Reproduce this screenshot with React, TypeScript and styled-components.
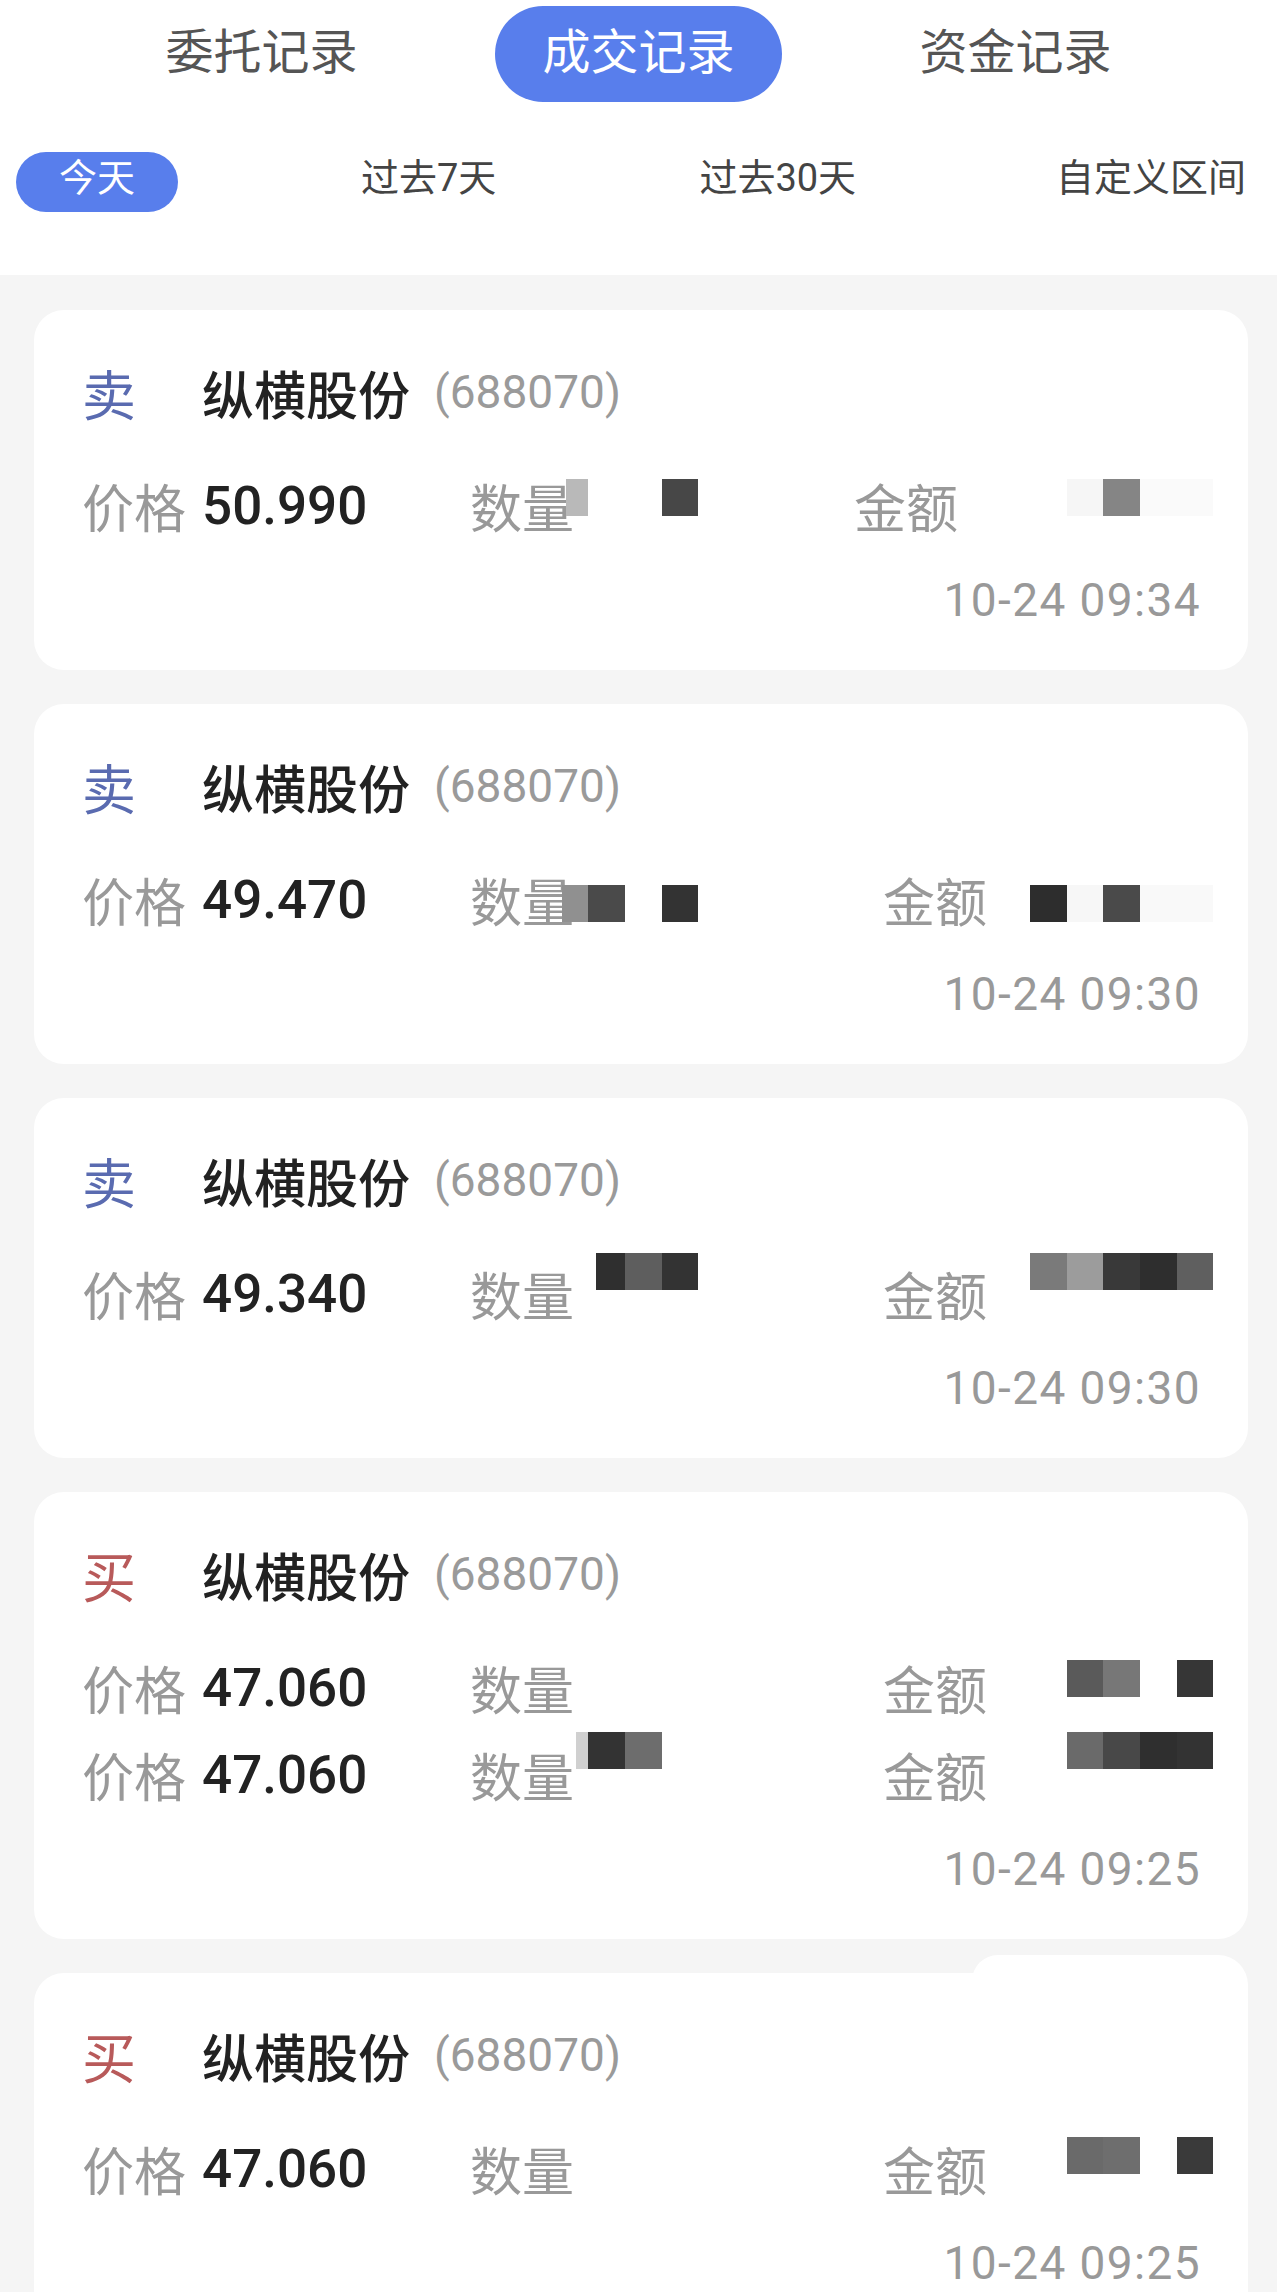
import React from "react"
import styled, { createGlobalStyle } from "styled-components"

type Cell = [number, string]
type Mosaic = { dx: number; dy: number; cells: Cell[] }
type Row = { price: string; qty?: Mosaic; amount?: Mosaic }
type Trade = { side: "buy" | "sell"; rows: Row[]; time: string; tightAmount?: boolean; bump?: boolean }

const trades: Trade[] = [
  {
    side: "sell",
    tightAmount: true,
    time: "10-24 09:34",
    rows: [
      {
        price: "50.990",
        qty: { dx: -8, dy: -8, cells: [[22, "#b9b9b9"], [74, "transparent"], [36, "#474747"]] },
        amount: { dx: 109, dy: -8, cells: [[36, "#f6f6f6"], [37, "#858585"], [73, "#fafafa"]] },
      },
    ],
  },
  {
    side: "sell",
    time: "10-24 09:30",
    rows: [
      {
        price: "49.470",
        qty: { dx: -12, dy: 4, cells: [[26, "#909090"], [37, "#4a4a4a"], [37, "transparent"], [36, "#333333"]] },
        amount: { dx: 43, dy: 4, cells: [[37, "#2d2d2d"], [36, "#f7f7f7"], [37, "#4a4a4a"], [73, "#f9f9f9"]] },
      },
    ],
  },
  {
    side: "sell",
    time: "10-24 09:30",
    rows: [
      {
        price: "49.340",
        qty: { dx: 22, dy: -22, cells: [[29, "#2f2f2f"], [37, "#5e5e5e"], [36, "#333333"]] },
        amount: {
          dx: 43,
          dy: -22,
          cells: [[37, "#7a7a7a"], [36, "#9c9c9c"], [37, "#393939"], [37, "#2e2e2e"], [36, "#5f5f5f"]],
        },
      },
    ],
  },
  {
    side: "buy",
    time: "10-24 09:25",
    rows: [
      {
        price: "47.060",
        amount: { dx: 80, dy: -9, cells: [[36, "#5a5a5a"], [37, "#777777"], [37, "transparent"], [36, "#363636"]] },
      },
      {
        price: "47.060",
        qty: { dx: 2, dy: -24, cells: [[12, "#d0d0d0"], [37, "#333333"], [37, "#6d6d6d"]] },
        amount: { dx: 80, dy: -24, cells: [[36, "#6a6a6a"], [37, "#484848"], [37, "#2f2f2f"], [36, "#333333"]] },
      },
    ],
  },
  {
    side: "buy",
    bump: true,
    time: "10-24 09:25",
    rows: [
      {
        price: "47.060",
        amount: { dx: 80, dy: -13, cells: [[36, "#6a6a6a"], [37, "#6e6e6e"], [37, "transparent"], [36, "#3a3a3a"]] },
      },
    ],
  },
]

const tabs = ["委托记录", "成交记录", "资金记录"]
// label and the space before it
const ranges: [string, number][] = [
  ["今天", 0],
  ["过去7天", 183],
  ["过去30天", 203],
  ["自定义区间", 200],
]

const Redacted = ({ m }: { m?: Mosaic }) =>
  m ? (
    <S.Mosaic $dx={m.dx} $dy={m.dy}>
      {m.cells.map(([w, c], i) => (
        <S.Cell key={i} $w={w} $c={c} />
      ))}
    </S.Mosaic>
  ) : null

const TradeCard = ({ trade }: { trade: Trade }) => (
  <S.Card $bump={trade.bump}>
    <S.Title>
      <S.Side $side={trade.side}>{trade.side === "buy" ? "买" : "卖"}</S.Side>
      <S.Name>纵横股份</S.Name>
      <S.Code>(688070)</S.Code>
    </S.Title>
    <S.Rows>
      {trade.rows.map((r, i) => (
        <S.Row key={i} $tight={trade.tightAmount}>
          <S.Field>
            <S.Label>价格</S.Label>
            <S.Value>{r.price}</S.Value>
          </S.Field>
          <S.Field>
            <S.Label>数量</S.Label>
            <Redacted m={r.qty} />
          </S.Field>
          <S.Field>
            <S.Label>金额</S.Label>
            <Redacted m={r.amount} />
          </S.Field>
        </S.Row>
      ))}
    </S.Rows>
    <S.Time>{trade.time}</S.Time>
  </S.Card>
)

export default function App() {
  return (
    <>
      <GlobalStyle />
      <S.Page>
        <S.Header>
          <S.TabBar>
            {tabs.map((t) => (
              <S.Tab key={t} $active={t === "成交记录"}>
                {t}
              </S.Tab>
            ))}
          </S.TabBar>
          <S.Ranges>
            {ranges.map(([r, space]) => (
              <S.Range key={r} $active={r === "今天"} $space={space}>
                {r}
              </S.Range>
            ))}
          </S.Ranges>
        </S.Header>
        <S.List>
          {trades.map((t, i) => (
            <TradeCard key={i} trade={t} />
          ))}
        </S.List>
      </S.Page>
    </>
  )
}

const GlobalStyle = createGlobalStyle`
  html, body {
    margin: 0;
    padding: 0;
    background: #f5f5f5;
  }
  body {
    font-family: Roboto, "Noto Sans CJK SC", sans-serif;
    -webkit-font-smoothing: antialiased;
  }
`

const S = {
  Page: styled.div`
    width: 1277px;
    min-height: 2292px;
    background: #f5f5f5;
  `,
  Header: styled.header`
    height: 275px;
    background: #fff;
    display: flex;
    flex-direction: column;
  `,
  TabBar: styled.nav`
    display: flex;
    justify-content: center;
    gap: 90px;
    padding-top: 6px;
  `,
  Tab: styled.div<{ $active?: boolean }>`
    width: 287px;
    height: 96px;
    box-sizing: border-box;
    padding-bottom: 3px;
    border-radius: 48px;
    display: flex;
    align-items: center;
    justify-content: center;
    font-size: 48px;
    line-height: 1;
    color: ${({ $active }) => ($active ? "#fff" : "#555")};
    background: ${({ $active }) => ($active ? "#587eec" : "transparent")};
  `,
  Ranges: styled.div`
    display: flex;
    align-items: center;
    margin-top: 50px;
    padding-left: 16px;
  `,
  Range: styled.div<{ $active?: boolean; $space: number }>`
    height: 60px;
    box-sizing: border-box;
    margin-left: ${({ $space }) => $space}px;
    padding: 0 ${({ $active }) => ($active ? "43px" : "0")} 8px;
    border-radius: 30px;
    display: flex;
    align-items: center;
    font-size: 38px;
    line-height: 1;
    color: ${({ $active }) => ($active ? "#fff" : "#444")};
    background: ${({ $active }) => ($active ? "#587eec" : "transparent")};
  `,
  List: styled.main`
    display: flex;
    flex-direction: column;
    gap: 34px;
    padding: 35px 29px 0 34px;
  `,
  Card: styled.section<{ $bump?: boolean }>`
    position: relative;
    background: #fff;
    border-radius: 30px;
    padding: 52px 47px 45px 48px;

    &::before {
      content: "";
      display: ${({ $bump }) => ($bump ? "block" : "none")};
      position: absolute;
      top: -18px;
      right: 0;
      width: 276px;
      height: 48px;
      background: #fff;
      border-radius: 26px 30px 0 0;
    }
  `,
  Title: styled.div`
    display: flex;
    align-items: center;
    height: 60px;
  `,
  Side: styled.span<{ $side: "buy" | "sell" }>`
    width: 120px;
    font-size: 54px;
    color: ${({ $side }) => ($side === "buy" ? "#b85a5a" : "#5a6bb0")};
  `,
  Name: styled.span`
    font-size: 52px;
    font-weight: 500;
    color: #222;
  `,
  Code: styled.span`
    margin-left: 24px;
    font-size: 46px;
    color: #9a9a9a;
  `,
  Rows: styled.div`
    display: flex;
    flex-direction: column;
    gap: 27px;
    margin-top: 46px;
  `,
  Row: styled.div<{ $tight?: boolean }>`
    display: grid;
    grid-template-columns: 388px ${({ $tight }) => ($tight ? "384px" : "413px")} 1fr;
    height: 60px;
    align-items: center;
  `,
  Field: styled.div`
    display: flex;
    align-items: center;
  `,
  Label: styled.span`
    font-size: 52px;
    color: #999;
    white-space: nowrap;
  `,
  Value: styled.span`
    margin-left: 16px;
    font-size: 53px;
    font-weight: 500;
    color: #222;
  `,
  Mosaic: styled.span<{ $dx: number; $dy: number }>`
    display: flex;
    margin-left: ${({ $dx }) => $dx}px;
    transform: translateY(${({ $dy }) => $dy}px);
  `,
  Cell: styled.span<{ $w: number; $c: string }>`
    width: ${({ $w }) => $w}px;
    height: 37px;
    background: ${({ $c }) => $c};
  `,
  Time: styled.div`
    margin-top: 47px;
    height: 50px;
    line-height: 50px;
    text-align: right;
    font-size: 46px;
    letter-spacing: 1.4px;
    color: #999;
  `,
}
